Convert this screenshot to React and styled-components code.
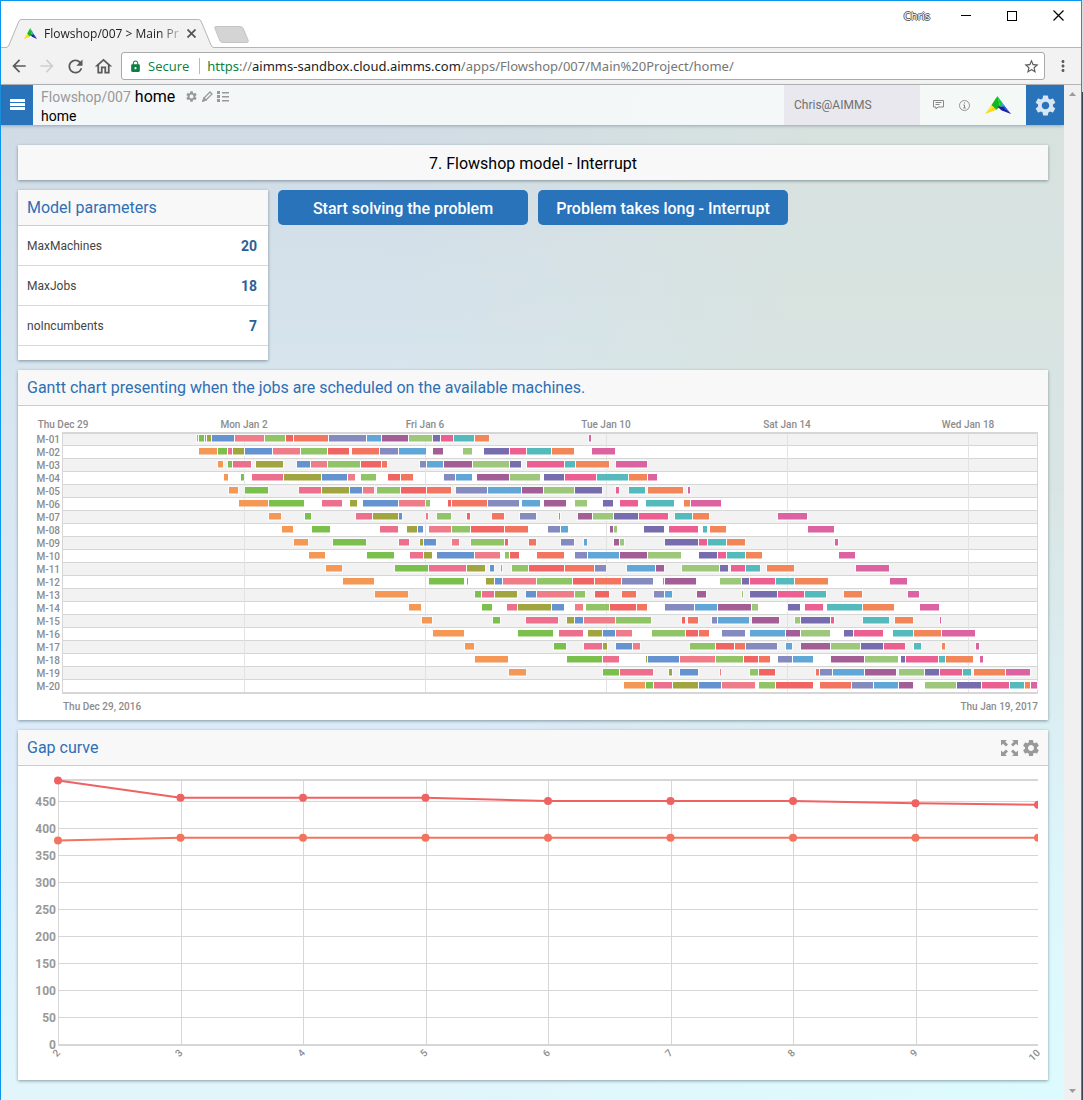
import React from "react";
import styled, { createGlobalStyle } from "styled-components";
import {
  MdArrowBack,
  MdArrowForward,
  MdRefresh,
  MdOutlineHome,
  MdLock,
  MdStarBorder,
  MdMoreVert,
  MdSettings,
} from "react-icons/md";

const UI = `"Open Sans", "Noto Sans", sans-serif`;
const APP = `Roboto, "Liberation Sans", sans-serif`;

const GlobalStyle = createGlobalStyle`
  *, *::before, *::after { box-sizing: border-box; }
  body { margin: 0; font-family: ${APP}; }
  button { border: 0; padding: 0; background: none; font: inherit; color: inherit; cursor: pointer; }
  svg { display: block; flex: none; }
  h1, h2 { margin: 0; font-weight: 400; }
`;

/* ---------- browser frame ---------- */

const Desktop = styled.div`
  min-height: 100vh;
  display: flex;
  padding-right: 1px;
  background: linear-gradient(#d9dde2 92px, #3c4250 92px);
`;

const Window = styled.div`
  flex: 1;
  min-width: 0;
  display: flex;
  flex-direction: column;
  border: solid #0a96ee;
  border-width: 1px 1px 0;
  background: #fff;
`;

const TitleBar = styled.div`
  display: flex;
  align-items: flex-end;
  height: 47px;
  padding-left: 5px;
  border-bottom: 1px solid #b6b6b6;
`;

const Tab = styled.div`
  position: relative;
  display: flex;
  align-items: center;
  width: 208px;
  height: 29px;
  margin-bottom: -1px;
  padding: 0 18px;
  font: 12px/16px ${UI};
  color: #222;
`;

const TabShape = styled.svg`
  position: absolute;
  inset: 0;
`;

const TabLabel = styled.span`
  position: relative;
  flex: 1;
  margin-left: 7px;
  white-space: nowrap;
  mask-image: linear-gradient(90deg, #000 80%, transparent);
`;

const TabPart = styled.span`
  position: relative;
  display: flex;
`;

const TabClose = styled.button`
  position: relative;
  display: flex;
`;

const NewTab = styled.button`
  margin-bottom: 4px;
`;

const WindowControls = styled.div`
  display: flex;
  align-items: center;
  align-self: flex-start;
  height: 29px;
  margin-left: auto;
`;

const ProfileName = styled.button`
  margin-right: 13px;
  font: 11px/16px ${UI};
  color: #fff;
  text-shadow: 1px 0 #555, -1px 0 #555, 0 1px #555, 0 -1px #555;
`;

const WindowButton = styled.button`
  display: grid;
  place-items: center;
  width: 46px;
  height: 29px;
`;

const Toolbar = styled.div`
  display: flex;
  align-items: center;
  height: 37px;
  padding-left: 4px;
  background: #f2f2f2;
  border-bottom: 1px solid #b6b6b6;
`;

const ToolButton = styled.button`
  display: grid;
  place-items: center;
  width: ${(p) => p.$width || 28}px;
  height: 28px;
  color: ${(p) => (p.disabled ? "#cfcfcf" : "#5a5a5a")};
`;

const AddressBar = styled.div`
  flex: 1;
  min-width: 0;
  display: flex;
  align-items: center;
  height: 28px;
  margin-left: 4px;
  padding: 0 4px 0 7px;
  border: 1px solid #a9a9a9;
  border-radius: 3px;
  background: #fff;
  font: 13px/20px ${UI};
  color: #0b8043;
`;

const Secure = styled.span`
  margin-left: 6px;
  padding-right: 10px;
  border-right: 1px solid #bbb;
  line-height: 16px;
`;

const Url = styled.span`
  flex: 1;
  min-width: 0;
  margin-left: 7px;
  overflow: hidden;
  white-space: nowrap;
  font-family: "Noto Sans", sans-serif;
`;

const UrlPart = styled.span`
  color: ${(p) => (p.$strong ? "#222" : "#767676")};
`;

const Viewport = styled.div`
  flex: 1;
  display: flex;
`;

const ScrollTrack = styled.div`
  display: flex;
  flex-direction: column;
  justify-content: space-between;
  align-items: center;
  width: 17px;
  padding: 7px 0;
  background: #f0f0f0;
`;

/* ---------- application ---------- */

const Page = styled.div`
  flex: 1;
  min-width: 0;
  background:
    radial-gradient(circle at 100% 100%, #dcfbff, rgba(220, 251, 255, 0) 620px),
    radial-gradient(ellipse 55% 75% at 90% 20%, rgba(217, 228, 222, 0.8) 30%, rgba(217, 232, 226, 0)),
    linear-gradient(#d0dbe5 40px, #d7e5ef 300px, #dbebfa 680px, #e1f5fb 1000px);
`;

const AppHeader = styled.header`
  display: flex;
  height: 40px;
  background: rgba(248, 250, 251, 0.88);
  box-shadow: 0 1px 3px rgba(90, 110, 130, 0.5);
`;

const BlueButton = styled.button`
  display: grid;
  place-items: center;
  width: ${(p) => p.$width}px;
  background: #2973ba;
  color: #d8e6f4;
`;

const Crumbs = styled.div`
  flex: 1;
  padding: 2px 8px 0;
  color: #000;
`;

const CrumbLine = styled.div`
  display: flex;
  align-items: center;
  height: 19px;
  font-size: ${(p) => p.$size}px;
  white-space: nowrap;
`;

const AppName = styled.a`
  margin-right: 4px;
  font-size: 14px;
  color: #999;
  text-decoration: none;
`;

const CrumbTools = styled.span`
  display: flex;
  align-items: center;
  gap: 4px;
  margin-left: 10px;
  color: #999;
`;

const IconButton = styled.button`
  display: flex;
`;

const User = styled.div`
  display: flex;
  align-items: center;
  width: 136px;
  padding-left: 10px;
  background: #e8e8ee;
  font-size: 12px;
  color: #707070;
`;

const HeaderTools = styled.div`
  display: flex;
  align-items: center;
  gap: 15px;
  padding: 0 15px 0 13px;
  color: #888;
`;

const Content = styled.main`
  display: flex;
  flex-direction: column;
  gap: 10px;
  padding: 20px 16px 20px 17px;
`;

const Card = styled.section`
  background: #fff;
  box-shadow: 0 1px 3px rgba(60, 80, 90, 0.55);
`;

const PageTitle = styled.h1`
  height: 35px;
  background: #f8f8f8;
  box-shadow: 0 1px 3px rgba(60, 80, 90, 0.55);
  font-size: 16px;
  line-height: 37px;
  text-align: center;
  color: #000;
`;

const CardHeader = styled.div`
  display: flex;
  align-items: center;
  gap: 3px;
  height: 36px;
  padding: 0 7px 0 9px;
  background: #f8f8f8;
  border-bottom: 1px solid #ccc;
  color: #999;
`;

const CardTitle = styled.h2`
  flex: 1;
  font-size: 16px;
  line-height: 20px;
  padding-top: 1px;
  color: #2e6fb5;
`;

const ControlRow = styled.div`
  display: flex;
  align-items: flex-start;
  gap: 10px;
`;

const ParameterCard = styled(Card)`
  width: 250px;
  padding-bottom: 14px;
`;

const Parameters = styled.table`
  width: 100%;
  border-spacing: 0;
`;

const ParameterName = styled.th`
  height: 40px;
  padding: 0 9px;
  border-bottom: 1px solid #d8d8d8;
  font-size: 12px;
  font-weight: 400;
  text-align: left;
  color: #444;
`;

const ParameterValue = styled.td`
  padding: 0 11px;
  border-bottom: 1px solid #d8d8d8;
  font-size: 14px;
  font-weight: 700;
  text-align: right;
  color: #2b6196;
`;

const ActionButton = styled.button`
  width: 250px;
  height: 35px;
  padding-top: 1px;
  border-radius: 5px;
  background: #2973ba;
  font-size: 16px;
  font-weight: 500;
  color: #fff;
`;

const ChartArea = styled.div`
  padding: ${(p) => p.$pad};
`;

const Plot = styled.svg`
  width: 100%;
  height: ${(p) => p.$height}px;
  overflow: visible;
`;

const ChartText = styled.text`
  font-family: ${APP};
  font-size: ${(p) => p.$size || 10}px;
  font-weight: ${(p) => (p.$size ? 700 : 500)};
  fill: ${(p) => (p.$size ? "#999" : "#8c8c8c")};
`;

/* ---------- icons ---------- */

const AimmsLogo = ({ width, height }) => (
  <svg width={width} height={height} viewBox="0 0 24 17" preserveAspectRatio="none" aria-hidden="true">
    <path d="M0 17 6 8.500 10.500 13z" fill="#ffd21a" />
    <path d="M0 17 6 8.500 8 10.500z" fill="#f4ee3c" />
    <path d="M11.500 0 6 8.500 10.500 13 14 10z" fill="#12b81e" />
    <path d="M11.500 0 14 10 18.500 10z" fill="#08cf3a" />
    <path d="M14 4 18.500 10 24 17 16 9z" fill="#3aa0ff" />
    <path d="M11.500 10 18 10 24 17 15 13.500z" fill="#1b1f9a" />
    <path d="M17 9 24 17 18 12z" fill="#2f5bff" />
  </svg>
);

const HamburgerIcon = () => (
  <svg width="15" height="12" viewBox="0 0 15 12" fill="#fff" aria-hidden="true">
    <rect width="15" height="3" />
    <rect y="4" width="15" height="3" />
    <rect y="8" width="15" height="3" />
  </svg>
);

const PencilIcon = () => (
  <svg width="11" height="11" viewBox="0 0 11 11" fill="none" stroke="currentColor" strokeWidth="1.300" aria-hidden="true">
    <path d="M1 10 2 7 8 1 10 3 4 9z" />
    <path d="M1 10 2 7 4 9z" fill="currentColor" />
  </svg>
);

const ListIcon = () => (
  <svg width="12" height="11" viewBox="0 0 12 11" fill="currentColor" aria-hidden="true">
    <path d="M0 0h3v3H0zM0 4h3v3H0zM0 8h3v3H0zM5 1h7v1.500H5zM5 5h7v1.500H5zM5 9h7v1.500H5z" />
  </svg>
);

const CommentIcon = () => (
  <svg width="11" height="10" viewBox="0 0 11 10" fill="none" stroke="currentColor" aria-hidden="true">
    <path d="M.5.5h10v6.500H5L3 9V7H.5zM2.500 2.500h6M2.500 4.500h4" />
  </svg>
);

const InfoIcon = () => (
  <svg width="11" height="11" viewBox="0 0 11 11" fill="none" stroke="currentColor" aria-hidden="true">
    <circle cx="5.500" cy="5.500" r="5" strokeWidth=".9" />
    <path d="M5.500 2.400v1.200M4.300 5h1.200v3M4.300 8h2.500" />
  </svg>
);

const ExpandIcon = () => (
  <svg width="17" height="16" viewBox="0 0 17 16" fill="currentColor" aria-hidden="true">
    <path d="M0 0h6L4.200 1.800 7 4.600 5 6.600 2 3.700 0 5.600z" />
    <path d="M17 0h-6l1.800 1.800L10 4.600l2 2 3-2.900 2 1.900z" />
    <path d="M0 16h6l-1.800-1.800L7 11.400l-2-2-3 2.900-2-1.900z" />
    <path d="M17 16h-6l1.800-1.800L10 11.400l2-2 3 2.900 2-1.900z" />
  </svg>
);

const ScrollArrow = ({ down }) => (
  <svg width="7" height="4" viewBox="0 0 7 4" fill="#9c9c9c" aria-hidden="true">
    <path d={down ? "M0 0h7L3.500 4z" : "M0 4h7L3.500 0z"} />
  </svg>
);

/* ---------- data ---------- */

const JOB_COLORS = [
  "#f69855", "#7bbf4d", "#ec6f8e", "#a1a540", "#6593cf", "#ee7d89",
  "#90c466", "#f06464", "#f3755f", "#858abf", "#60a6d6", "#a35f95",
  "#9dc77b", "#776dae", "#eb6091", "#54babb", "#f38658", "#db63a2",
];

/* One line per machine; start-end of every job, on a scale that runs from 62 to 1038. */
const SCHEDULE = [
  "197-198 199-204 205-206 207-211 212-234 235-264 265-285 286-293 294-328 329-366 367-381 382-408 409-432 433-440 441-453 454-474 475-489 589-591",
  "199-217 218-227 228-232 233-244 245-272 273-300 301-327 328-349 352-379 380-398 399-426 433-443 463-472 484-509 510-526 527-551 552-574 592-615",
  "218-223 228-232 233-251 256-283 297-310 311-327 328-360 361-381 382-387 420-426 427-443 444-472 473-509 510-521 527-564 565-575 576-609 616-647",
  "224-228 241-244 252-283 284-321 322-347 348-355 361-376 388-400 401-413 444-455 456-472 477-509 510-540 544-564 565-596 597-628 629-647 648-657",
  "229-238 245-268 299-321 322-349 350-362 363-374 377-400 401-426 427-451 456-487 488-521 522-543 544-574 575-602 616-619 629-645 648-683 688-690",
  "239-268 269-304 322-342 350-357 363-398 399-425 426-430 448-451 452-487 488-519 522-540 544-566 575-587 603-613 620-638 646-674 684-690 691-721",
  "269-281 305-311 356-372 373-398 399-402 426-428 437-451 467-470 492-504 520-536 559-560 578-592 593-613 614-638 639-668 675-692 693-709 778-807",
  "282-293 312-330 380-398 407-417 418-423 429-451 452-470 471-504 505-528 548-560 561-568 610-613 614-617 644-664 669-698 703-707 710-726 808-834",
  "294-308 333-366 399-409 420-423 424-436 452-459 471-504 505-508 529-536 561-574 584-587 614-619 620-624 665-698 699-707 708-726 727-745 835-838",
  "309-325 367-394 410-423 424-432 437-474 475-500 505-509 510-519 537-564 575-587 588-619 620-647 648-681 699-717 718-726 727-745 746-762 839-855",
  "326-342 395-428 429-466 467-485 490-494 501-502 512-528 529-564 565-594 595-606 627-655 656-664 682-719 720-728 731-745 746-760 767-794 856-889",
  "343-374 429-464 467-468 486-494 495-502 503-536 537-572 573-594 595-621 622-653 663-664 665-696 720-741 742-749 750-775 776-794 795-828 890-907",
  "375-408 475-481 482-494 495-517 526-536 537-574 575-585 595-609 622-636 654-664 665-672 697-706 742-743 750-777 778-804 805-826 844-862 908-919",
  "409-421 482-492 507-517 518-551 552-564 575-583 586-609 610-636 637-647 665-694 695-717 718-751 752-758 788-800 805-823 827-862 863-894 920-939",
  "422-432 493-500 526-558 567-574 575-583 584-615 616-651 682-685 688-698 712-717 718-749 752-779 795-800 801-830 831-834 863-889 895-913 940-941",
  "433-464 518-553 559-583 588-602 603-615 616-632 652-685 686-698 699-709 722-745 750-785 786-800 801-830 844-853 854-883 893-913 914-941 942-975",
  "465-474 554-566 584-602 603-607 616-632 633-640 690-715 716-734 735-745 746-777 786-792 801-830 831-860 861-883 884-905 914-921 942-945 976-979",
  "475-508 567-602 603-619 646-647 648-679 680-715 716-743 744-758 759-770 778-792 793-813 831-864 865-898 901-905 906-938 939-945 946-973 980-983",
  "509-526 603-619 620-653 669-672 680-698 720-721 750-758 759-775 816-819 820-832 833-864 865-896 899-924 925-939 940-962 963-971 974-1005 1006-1030",
  "624-645 646-653 654-672 673-698 699-721 722-755 759-775 776-813 820-851 852-873 874-898 899-913 925-956 957-981 982-1009 1010-1024 1025-1030 1031-1037",
].map((line) => line.split(" ").map((span) => span.split("-").map(Number)));

const DATES = [
  ["Thu Dec 29", 63],
  ["Mon Jan 2", 244],
  ["Fri Jan 6", 425],
  ["Tue Jan 10", 606],
  ["Sat Jan 14", 787],
  ["Wed Jan 18", 968],
];

const at = (v) => `${((v - 62) / 976) * 100}%`;
const span = (v) => `${(v / 976) * 100}%`;

const CURVES = [
  { color: "#ef6262", values: [489, 457, 457, 457, 451, 451, 451, 447, 444] },
  { color: "#f2745e", values: [378, 383, 383, 383, 383, 383, 383, 383, 383] },
];

const PARAMETERS = [
  ["MaxMachines", 20],
  ["MaxJobs", 18],
  ["noIncumbents", 7],
];

/* ---------- charts ---------- */

const ROW = 13;

function GanttChart() {
  return (
    <Plot $height={262} role="img" aria-label="Job schedule by machine">
      <g shapeRendering="crispEdges">
        {SCHEDULE.map((_, i) => (
          <g key={i}>
            {i % 2 === 0 && <rect y={i * ROW + 1} width="100%" height={ROW} fill="#f2f2f2" />}
            <rect y={(i + 1) * ROW} width="100%" height="1" fill="#d6d6d6" />
          </g>
        ))}
        {DATES.slice(1).map(([label, x]) => (
          <rect key={label} x={at(x)} width="1" height="261" fill="#e2e2e2" />
        ))}
        <rect width="100%" height="2" fill="#d6d6d6" />
        <rect y="260" width="100%" height="2" fill="#d6d6d6" />
        <rect width="1" height="262" fill="#d6d6d6" />
        <rect x={at(1037)} width="1" height="262" fill="#d6d6d6" />
        {SCHEDULE.map((jobs, i) =>
          jobs.map(([start, end], j) => (
            <g key={`${i}-${j}`} fill={JOB_COLORS[j]}>
              <rect x={at(start - 1)} y={i * ROW + 2} width={span(end - start + 2)} height="9" fill="#fff" opacity=".6" />
              <rect x={at(start)} y={i * ROW + 3} width={span(end - start)} height="7" opacity=".5" />
              <rect x={at(start)} y={i * ROW + 3} width={span(end - start)} height="6" />
            </g>
          ))
        )}
      </g>
      {SCHEDULE.map((_, i) => (
        <ChartText key={i} x="-2" y={i * ROW + 11} textAnchor="end">
          {`M-${String(i + 1).padStart(2, "0")}`}
        </ChartText>
      ))}
      {DATES.map(([label, x]) => (
        <ChartText key={label} x={at(x)} y="-4" textAnchor="middle">{label}</ChartText>
      ))}
      <ChartText x="1" y="278">Thu Dec 29, 2016</ChartText>
      <ChartText x="100%" y="278" textAnchor="end">Thu Jan 19, 2017</ChartText>
    </Plot>
  );
}

const yOf = (v) => 266 - v * 0.541;
const xOf = (i) => `${i * 12.5}%`;

function GapChart() {
  const levels = Array.from({ length: 10 }, (_, i) => i * 50);
  return (
    <Plot $height={267} role="img" aria-label="Gap curve">
      <clipPath id="gap-clip">
        <rect x="-100%" y="-10" width="200%" height="290" />
      </clipPath>
      <g fill="#d6d6d6" shapeRendering="crispEdges">
        {levels.slice(1).map((v) => (
          <rect key={v} y={Math.round(yOf(v)) - 1} width="100%" height="1" />
        ))}
        {CURVES[0].values.slice(0, 8).map((_, i) => (
          <rect key={i} x={xOf(i)} width="1" height="267" />
        ))}
        <rect width="100%" height="2" />
        <rect y="265" width="100%" height="2" />
      </g>
      <g clipPath="url(#gap-clip)">
        {CURVES.map(({ color, values }) => (
          <g key={color} fill={color} stroke={color}>
            {values.slice(1).map((v, i) => (
              <line key={i} x1={xOf(i)} y1={yOf(values[i])} x2={xOf(i + 1)} y2={yOf(v)} strokeWidth="2" />
            ))}
            {values.map((v, i) => (
              <circle key={i} cx={xOf(i)} cy={yOf(v)} r="4" stroke="none" />
            ))}
          </g>
        ))}
      </g>
      {levels.map((v) => (
        <ChartText key={v} $size={12} x="-2" y={Math.round(yOf(v)) + 4} textAnchor="end">{v}</ChartText>
      ))}
      {CURVES[0].values.map((_, i) => (
        <svg key={i} x={xOf(i)} y="276" overflow="visible">
          <ChartText textAnchor="end" transform="rotate(-45) translate(3 1)">{i + 2}</ChartText>
        </svg>
      ))}
    </Plot>
  );
}

/* ---------- page ---------- */

export default function App() {
  return (
    <Desktop>
      <GlobalStyle />
      <Window>
        <TitleBar>
          <Tab>
            <TabShape width="208" height="29" viewBox="0 0 208 29" aria-hidden="true">
              <path d="M0 29V28.500Q2 28.500 3 26L13 2Q14 .5 15 .5H192Q194 .5 195 2L205 26Q206 28.500 208 28.500V29z" fill="#f2f2f2" />
              <path d="M0 28.500Q2 28.500 3 26L13 2Q14 .5 15 .5H192Q194 .5 195 2L205 26Q206 28.500 208 28.500" fill="none" stroke="#b6b6b6" />
            </TabShape>
            <TabPart><AimmsLogo width={13} height={11} /></TabPart>
            <TabLabel>Flowshop/007 &gt; Main Pr</TabLabel>
            <TabClose aria-label="Close tab">
              <svg width="9" height="9" viewBox="0 0 9 9" stroke="#555" strokeWidth="1.800" aria-hidden="true">
                <path d="M.5.5l8 8M8.500.5l-8 8" />
              </svg>
            </TabClose>
          </Tab>
          <NewTab aria-label="New tab">
            <svg width="35" height="17" viewBox="0 0 35 17" aria-hidden="true">
              <path d="M2 .5H26Q28 .5 29 2L34 14Q35 16.500 33 16.500H9Q7 16.500 6 15L.8 2Q.5.5 2 .5z" fill="#d4d4d4" stroke="#c4c4c4" />
            </svg>
          </NewTab>
          <WindowControls>
            <ProfileName>Chris</ProfileName>
            <WindowButton aria-label="Minimize">
              <svg width="10" height="1" aria-hidden="true"><rect width="10" height="1" /></svg>
            </WindowButton>
            <WindowButton aria-label="Maximize">
              <svg width="10" height="10" fill="none" stroke="#000" aria-hidden="true"><rect x=".5" y=".5" width="9" height="9" /></svg>
            </WindowButton>
            <WindowButton aria-label="Close">
              <svg width="11" height="11" stroke="#000" strokeWidth="1.200" aria-hidden="true"><path d="M.5.5l10 10M10.500.5l-10 10" /></svg>
            </WindowButton>
          </WindowControls>
        </TitleBar>

        <Toolbar>
          <ToolButton aria-label="Back"><MdArrowBack size={20} /></ToolButton>
          <ToolButton aria-label="Forward" disabled><MdArrowForward size={20} /></ToolButton>
          <ToolButton aria-label="Reload"><MdRefresh size={21} /></ToolButton>
          <ToolButton aria-label="Home"><MdOutlineHome size={21} /></ToolButton>
          <AddressBar>
            <MdLock size={13} aria-hidden="true" />
            <Secure>Secure</Secure>
            <Url>
              https<UrlPart>://</UrlPart>
              <UrlPart $strong>aimms-sandbox.cloud.aimms.com</UrlPart>
              <UrlPart>/apps/Flowshop/007/Main%20Project/home/</UrlPart>
            </Url>
            <ToolButton aria-label="Bookmark this page" $width={18}><MdStarBorder size={17} /></ToolButton>
          </AddressBar>
          <ToolButton aria-label="Menu" $width={36}><MdMoreVert size={18} /></ToolButton>
        </Toolbar>

        <Viewport>
          <Page>
            <AppHeader>
              <BlueButton $width={32} aria-label="Open menu"><HamburgerIcon /></BlueButton>
              <Crumbs>
                <CrumbLine $size={16}>
                  <AppName href="#app">Flowshop/007</AppName>
                  home
                  <CrumbTools>
                    <IconButton aria-label="Page settings"><MdSettings size={13} /></IconButton>
                    <IconButton aria-label="Edit page"><PencilIcon /></IconButton>
                    <IconButton aria-label="Page list"><ListIcon /></IconButton>
                  </CrumbTools>
                </CrumbLine>
                <CrumbLine $size={14}>home</CrumbLine>
              </Crumbs>
              <User>Chris@AIMMS</User>
              <HeaderTools>
                <IconButton aria-label="Messages"><CommentIcon /></IconButton>
                <IconButton aria-label="Information"><InfoIcon /></IconButton>
                <AimmsLogo width={26} height={18} />
              </HeaderTools>
              <BlueButton $width={38} aria-label="Settings"><MdSettings size={25} /></BlueButton>
            </AppHeader>

            <Content>
              <PageTitle>7. Flowshop model - Interrupt</PageTitle>

              <ControlRow>
                <ParameterCard>
                  <CardHeader><CardTitle>Model parameters</CardTitle></CardHeader>
                  <Parameters>
                    <tbody>
                      {PARAMETERS.map(([name, value]) => (
                        <tr key={name}>
                          <ParameterName scope="row">{name}</ParameterName>
                          <ParameterValue>{value}</ParameterValue>
                        </tr>
                      ))}
                    </tbody>
                  </Parameters>
                </ParameterCard>
                <ActionButton>Start solving the problem</ActionButton>
                <ActionButton>Problem takes long - Interrupt</ActionButton>
              </ControlRow>

              <Card>
                <CardHeader>
                  <CardTitle>Gantt chart presenting when the jobs are scheduled on the available machines.</CardTitle>
                </CardHeader>
                <ChartArea $pad="26px 10px 26px 44px"><GanttChart /></ChartArea>
              </Card>

              <Card>
                <CardHeader>
                  <CardTitle>Gap curve</CardTitle>
                  <IconButton aria-label="Maximize chart"><ExpandIcon /></IconButton>
                  <IconButton aria-label="Chart settings"><MdSettings size={20} /></IconButton>
                </CardHeader>
                <ChartArea $pad="13px 10px 34px 40px"><GapChart /></ChartArea>
              </Card>
            </Content>
          </Page>
          <ScrollTrack>
            <ScrollArrow />
            <ScrollArrow down />
          </ScrollTrack>
        </Viewport>
      </Window>
    </Desktop>
  );
}
